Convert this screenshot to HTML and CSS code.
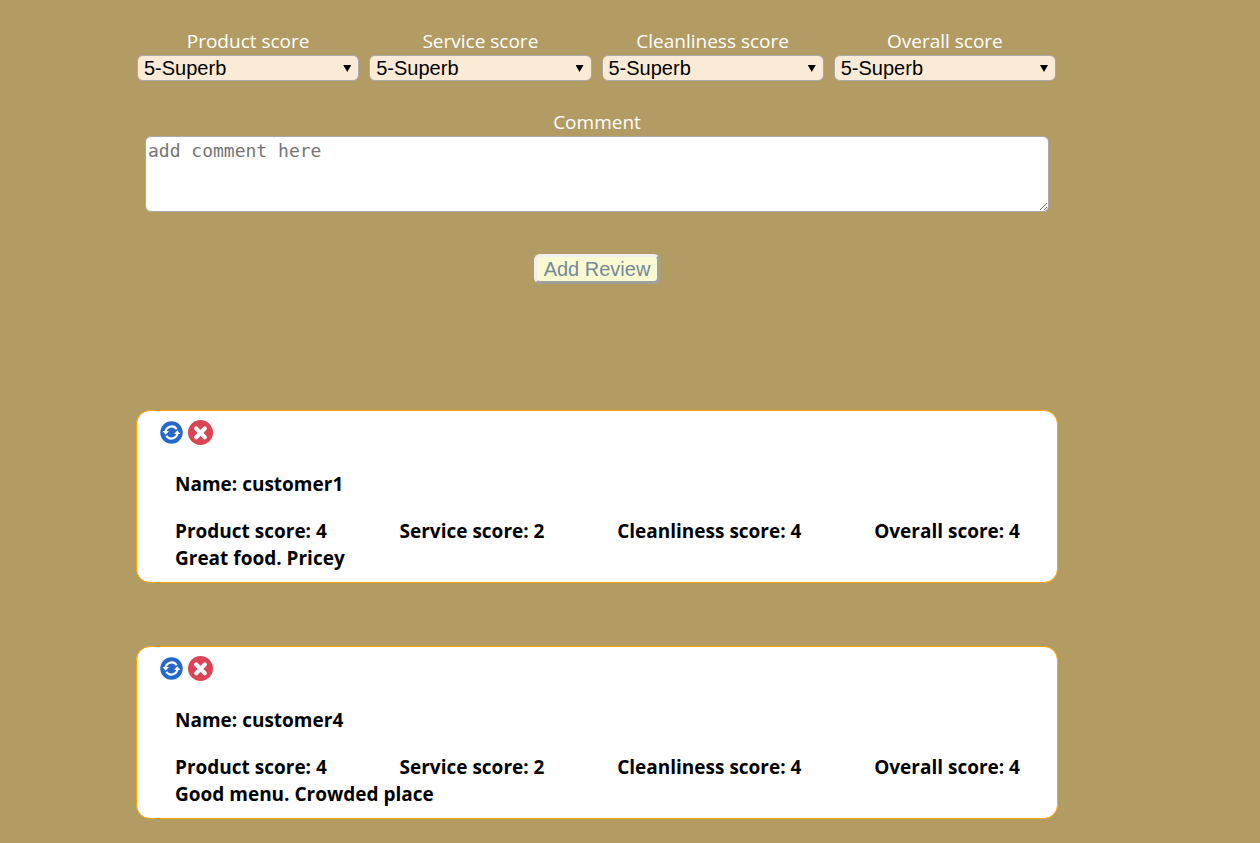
FILE: index.html
```html
<!DOCTYPE html>
<html lang="en">
<head>
<meta charset="utf-8">
<title>Reviews</title>
<link rel="stylesheet" href="styles.css">
</head>
<body>
<svg class="sprite" aria-hidden="true">
  <symbol id="refresh" viewBox="0 0 24 24">
    <circle cx="12" cy="12" r="11.7" fill="#2468cc"/>
    <g fill="none" stroke="#fff" stroke-width="2.2">
      <path d="M5.8 12A6.3 6.3 0 0 1 17.4 8.6"/>
      <path d="M18.2 12A6.3 6.3 0 0 1 6.6 15.4"/>
    </g>
    <path d="M2.6 10.4H9.4L6 14.4Z" fill="#fff"/>
    <path d="M21.4 13.6H14.6L18 9.6Z" fill="#fff"/>
  </symbol>
  <symbol id="remove" viewBox="0 0 25 25">
    <circle cx="12.5" cy="12.5" r="12.5" fill="#da4453"/>
    <path d="M8.2 8.6L16.8 17.2M16.8 8.6L8.2 17.2" stroke="#fff" stroke-width="4.2" stroke-linecap="round"/>
  </symbol>
</svg>
<main class="page">
  <form class="review-form">
    <div class="scores">
      <div class="field">
        <label for="product">Product score</label>
        <div class="picker"><select id="product"><option>5-Superb</option></select></div>
      </div>
      <div class="field">
        <label for="service">Service score</label>
        <div class="picker"><select id="service"><option>5-Superb</option></select></div>
      </div>
      <div class="field">
        <label for="cleanliness">Cleanliness score</label>
        <div class="picker"><select id="cleanliness"><option>5-Superb</option></select></div>
      </div>
      <div class="field">
        <label for="overall">Overall score</label>
        <div class="picker"><select id="overall"><option>5-Superb</option></select></div>
      </div>
    </div>
    <div class="field comment">
      <label for="comment">Comment</label>
      <textarea id="comment" placeholder="add comment here"></textarea>
    </div>
    <button class="submit" type="button">Add Review</button>
  </form>
  <section class="reviews">
    <article class="card">
      <div class="actions">
        <button type="button" aria-label="Update"><svg class="refresh"><use href="#refresh"/></svg></button>
        <button type="button" aria-label="Delete"><svg class="remove"><use href="#remove"/></svg></button>
      </div>
      <div class="details">
        <p class="name">Name: customer1</p>
        <div class="ratings">
          <span>Product score: 4</span><span>Service score: 2</span><span>Cleanliness score: 4</span><span>Overall score: 4</span>
        </div>
        <p>Great food. Pricey</p>
      </div>
    </article>
    <article class="card">
      <div class="actions">
        <button type="button" aria-label="Update"><svg class="refresh"><use href="#refresh"/></svg></button>
        <button type="button" aria-label="Delete"><svg class="remove"><use href="#remove"/></svg></button>
      </div>
      <div class="details">
        <p class="name">Name: customer4</p>
        <div class="ratings">
          <span>Product score: 4</span><span>Service score: 2</span><span>Cleanliness score: 4</span><span>Overall score: 4</span>
        </div>
        <p>Good menu. Crowded place</p>
      </div>
    </article>
  </section>
</main>
</body>
</html>
```
FILE: styles.css
```css
* {
  box-sizing: border-box;
}

body {
  margin: 0;
  background: #b29c64;
  font: 19px/27px "Segoe UI", "Open Sans", "Noto Sans", sans-serif;
}

.sprite {
  display: none;
}

.page {
  padding: 28px 202px 24px 136px;
}

.review-form {
  display: flex;
  flex-direction: column;
  align-items: center;
}

.scores {
  display: grid;
  grid-template-columns: repeat(4, 1fr);
  gap: 10px;
  width: 100%;
  padding: 0 2px 0 1px;
}

.field {
  display: flex;
  flex-direction: column;
  color: #fff;
  text-align: center;
}

.picker {
  position: relative;
}

.picker::after {
  content: "";
  position: absolute;
  top: 10px;
  right: 8px;
  width: 8px;
  height: 7px;
  background: #000;
  clip-path: polygon(0 0, 100% 0, 50% 100%);
  pointer-events: none;
}

select {
  display: block;
  appearance: none;
  width: 100%;
  height: 26px;
  padding: 0 6px;
  border: 1px solid #a9a9a9;
  border-radius: 6px;
  background: #faebd7;
  color: #000;
  font: 20px/24px Arial, "Liberation Sans", sans-serif;
}

.comment {
  width: 100%;
  padding: 0 9px;
  margin-top: 28px;
}

textarea {
  display: block;
  width: 100%;
  height: 76px;
  margin: 0;
  padding: 2px;
  border: 1px solid #a9a9a9;
  border-radius: 6px;
  background: #fff;
  font: 18px/24px "DejaVu Sans Mono", monospace;
}

textarea::placeholder {
  color: #757575;
}

.submit {
  height: 30px;
  margin-top: 42px;
  padding: 0 7px;
  border: 3px solid;
  border-color: #f0f0f0 #a0a0a0 #a0a0a0 #f0f0f0;
  border-radius: 6px;
  background: #fafad2;
  color: #778899;
  font: 20px/24px Arial, "Liberation Sans", sans-serif;
}

.reviews {
  display: flex;
  flex-direction: column;
  gap: 63px;
  margin-top: 126px;
}

.card {
  padding: 9px 23px 10px;
  border: 1px solid orange;
  border-radius: 14px;
  background: #fff;
  color: #000;
  font-weight: 700;
}

.actions {
  display: flex;
  align-items: center;
  gap: 5px;
}

.actions button {
  display: flex;
  padding: 0;
  border: 0;
  background: none;
}

.refresh {
  width: 23px;
  height: 23px;
}

.remove {
  width: 25px;
  height: 25px;
}

.details {
  padding: 26px 14px 0 15px;
}

.details p {
  margin: 0;
}

.details .name {
  margin-bottom: 20px;
}

.ratings {
  display: flex;
  justify-content: space-between;
}
```
